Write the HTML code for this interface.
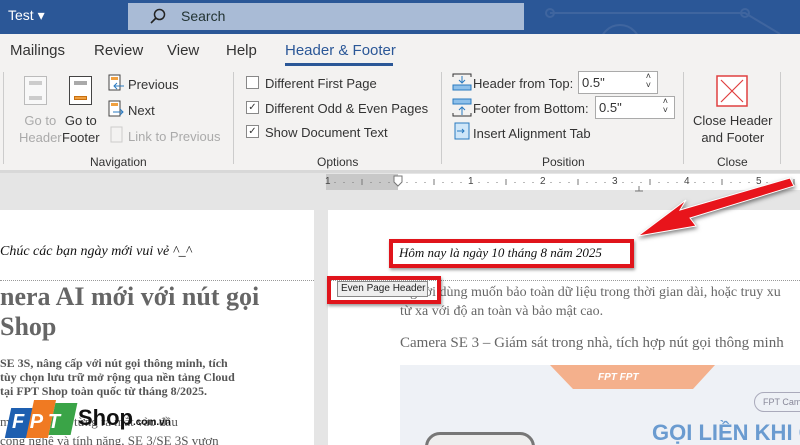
<!DOCTYPE html>
<html style="width:800px;height:445px;overflow:hidden"><head><meta charset="utf-8"><style>
*{margin:0;padding:0;box-sizing:border-box}
body{width:800px;height:445px;overflow:hidden;position:relative;background:#e5e5e5;font-family:"Liberation Sans",sans-serif;color:#333}
.a{position:absolute;white-space:nowrap}
.ser{font-family:"Liberation Serif","DejaVu Serif",serif}
.rb{font-size:13px;color:#333}
.cb{position:absolute;width:13px;height:13px;border:1px solid #888;background:#fff;font-size:10px;line-height:11px;text-align:center}
.inp{position:absolute;height:23px;border:1px solid #aaa;background:#fff;font-size:13px;padding:3px 3px}
.red{position:absolute;border:4px solid #e0141b;box-shadow:1px 2px 3px rgba(0,0,0,.4)}
.rn{position:absolute;top:176px;font-size:10px;color:#444}
</style></head><body>
<div class="a" style="left:0;top:0;width:800px;height:34px;background:#2b5797"></div>
<div class="a" style="left:8px;top:7px;color:#fff;font-size:14px">Test ▾</div>
<div class="a" style="left:128px;top:3px;width:396px;height:27px;background:#a9bbd6"></div>
<svg class="a" style="left:150px;top:8px" width="16" height="16"><circle cx="9.5" cy="6.5" r="5" fill="none" stroke="#222" stroke-width="1.5"/><line x1="6" y1="10" x2="1" y2="15" stroke="#222" stroke-width="1.6"/></svg>
<div class="a" style="left:181px;top:8px;font-size:14px;color:#233">Search</div>
<svg class="a" style="left:540px;top:0" width="260" height="34"><g fill="none" stroke="#3f659f" stroke-width="2"><path d="M10 13 H205 L240 34"/><circle cx="10" cy="13" r="4"/><circle cx="205" cy="13" r="4"/><circle cx="80" cy="45" r="20"/></g></svg>
<div class="a" style="left:0;top:34px;width:800px;height:136px;background:#f3f2f1"></div>
<div class="a" style="left:0;top:170px;width:800px;height:3px;background:#d8d8d8"></div>
<div class="a" style="left:10px;top:42px;font-size:15px">Mailings</div>
<div class="a" style="left:94px;top:42px;font-size:15px">Review</div>
<div class="a" style="left:167px;top:42px;font-size:15px">View</div>
<div class="a" style="left:226px;top:42px;font-size:15px">Help</div>
<div class="a" style="left:285px;top:42px;font-size:15px;color:#2b5797">Header &amp; Footer</div>
<div class="a" style="left:285px;top:63px;width:108px;height:3px;background:#2b5797"></div>
<div class="a" style="left:3px;top:72px;width:1px;height:92px;background:#ccc"></div>
<div class="a" style="left:233px;top:72px;width:1px;height:92px;background:#ccc"></div>
<div class="a" style="left:441px;top:72px;width:1px;height:92px;background:#ccc"></div>
<div class="a" style="left:683px;top:72px;width:1px;height:92px;background:#ccc"></div>
<div class="a" style="left:780px;top:72px;width:1px;height:92px;background:#ccc"></div>
<div class="a" style="left:24px;top:76px;width:23px;height:29px;border:1px solid #bbb;background:#f8f8f8"></div>
<div class="a" style="left:29px;top:81px;width:13px;height:4px;background:#ccc"></div>
<div class="a" style="left:29px;top:96px;width:13px;height:4px;background:#ccc"></div>
<div class="a" style="left:69px;top:76px;width:23px;height:29px;border:1px solid #444;background:#fff"></div>
<div class="a" style="left:74px;top:81px;width:13px;height:4px;background:#aaa"></div>
<div class="a" style="left:74px;top:96px;width:13px;height:4px;background:#f0a040;border:1px solid #c87010"></div>
<div class="a rb" style="left:19px;top:112px;color:#aaa;text-align:center;line-height:17px">Go to<br>Header</div>
<div class="a rb" style="left:62px;top:112px;text-align:center;line-height:17px">Go to<br>Footer</div>
<svg class="a" style="left:108px;top:74px" width="18" height="70"><rect x="1" y="1" width="11" height="15" fill="#fff" stroke="#444"/><rect x="3" y="3" width="7" height="3" fill="#f0a040"/><path d="M16 12H6M9 9 6 12 9 15" stroke="#2a7ac0" fill="none"/><rect x="1" y="27" width="11" height="15" fill="#fff" stroke="#444"/><rect x="3" y="29" width="7" height="3" fill="#f0a040"/><path d="M5 38H15M12 35 15 38 12 41" stroke="#2a7ac0" fill="none"/><rect x="3" y="53" width="11" height="15" fill="none" stroke="#ccc"/></svg>
<div class="a rb" style="left:128px;top:77px">Previous</div>
<div class="a rb" style="left:128px;top:103px">Next</div>
<div class="a rb" style="left:128px;top:129px;color:#aaa">Link to Previous</div>
<div class="a" style="left:90px;top:155px;font-size:12px">Navigation</div>
<div class="cb" style="left:246px;top:76px"></div>
<div class="cb" style="left:246px;top:101px">✓</div>
<div class="cb" style="left:246px;top:125px">✓</div>
<div class="a rb" style="left:265px;top:76px">Different First Page</div>
<div class="a rb" style="left:265px;top:101px">Different Odd &amp; Even Pages</div>
<div class="a rb" style="left:265px;top:125px">Show Document Text</div>
<div class="a" style="left:317px;top:155px;font-size:12px">Options</div>
<svg class="a" style="left:452px;top:73px" width="20" height="68"><path d="M1 4V1H19V4" stroke="#333" fill="none"/><path d="M10 3V10M7 7 10 10 13 7" stroke="#2a7ac0" fill="none"/><rect x="1" y="12" width="18" height="5" fill="#8ec0ea" stroke="#2a7ac0"/><rect x="1" y="26" width="18" height="5" fill="#8ec0ea" stroke="#2a7ac0"/><path d="M10 42V34M7 37 10 34 13 37" stroke="#2a7ac0" fill="none"/><path d="M1 40V43H19V40" stroke="#333" fill="none"/><rect x="3" y="50" width="14" height="16" fill="#cfe6f8" stroke="#2a7ac0"/><path d="M5 58H12M10 56 12 58 10 60" stroke="#2a7ac0" fill="none"/></svg>
<div class="a rb" style="left:473px;top:76px">Header from Top:</div>
<div class="inp" style="left:578px;top:71px;width:80px">0.5"<span style="position:absolute;right:6px;top:0;font-size:9px;line-height:9px">˄<br>˅</span></div>
<div class="a rb" style="left:473px;top:101px">Footer from Bottom:</div>
<div class="inp" style="left:595px;top:96px;width:80px">0.5"<span style="position:absolute;right:6px;top:0;font-size:9px;line-height:9px">˄<br>˅</span></div>
<div class="a rb" style="left:473px;top:126px">Insert Alignment Tab</div>
<div class="a" style="left:542px;top:155px;font-size:12px">Position</div>
<svg class="a" style="left:716px;top:75px" width="32" height="32"><rect x="1" y="1" width="30" height="30" fill="#fff" stroke="#e04040" stroke-width="1.5"/><path d="M5 5 27 27M27 5 5 27" stroke="#e04040" stroke-width="1.2"/></svg>
<div class="a rb" style="left:693px;top:112px;text-align:center;line-height:17px">Close Header<br>and Footer</div>
<div class="a" style="left:717px;top:155px;font-size:12px">Close</div>
<!-- ruler -->
<div class="a" style="left:326px;top:174px;width:474px;height:16px;background:#fff"></div>
<div class="a" style="left:326px;top:174px;width:72px;height:16px;background:#c8c8c8"></div>
<svg class="a" style="left:326px;top:174px" width="474" height="18"><g stroke="#777"><path d="M9 8v1M18 8v1M27 8v1M45 8v1M54 8v1M63 8v1M81 8v1M90 8v1M99 8v1M117 8v1M126 8v1M135 8v1M153 8v1M162 8v1M171 8v1M189 8v1M198 8v1M207 8v1M225 8v1M234 8v1M243 8v1M261 8v1M270 8v1M279 8v1M297 8v1M306 8v1M315 8v1M333 8v1M342 8v1M351 8v1M369 8v1M378 8v1M387 8v1M405 8v1M414 8v1M423 8v1M441 8v1M450 8v1M459 8v1"/><path d="M36 5v6M108 5v6M180 5v6M252 5v6M324 5v6M396 5v6M468 5v6"/><path d="M313 12v5M309 17h8"/></g><path d="M68 2h8v6l-4 4-4-4z" fill="#fff" stroke="#777"/></svg>
<div class="rn" style="left:325px">1</div>
<div class="rn" style="left:468px">1</div>
<div class="rn" style="left:540px">2</div>
<div class="rn" style="left:612px">3</div>
<div class="rn" style="left:684px">4</div>
<div class="rn" style="left:756px">5</div>
<!-- left page -->
<div class="a" style="left:0;top:210px;width:314px;height:235px;background:#fff"></div>
<div class="a ser" style="left:0;top:244px;font-size:14px;font-style:italic;color:#111">Chúc các bạn ngày mới vui vẻ ^_^</div>
<div class="a" style="left:0;top:280px;width:314px;border-top:1px dotted #999"></div>
<div class="a ser" style="left:0;top:282px;font-size:26px;font-weight:bold;color:#666;line-height:30px">nera AI mới với nút gọi<br>Shop</div>
<div class="a ser" style="left:0;top:356px;font-size:12px;font-weight:bold;color:#555;line-height:14px">SE 3S, nâng cấp với nút gọi thông minh, tích<br>tùy chọn lưu trữ mở rộng qua nền tảng Cloud<br>tại FPT Shop toàn quốc từ tháng 8/2025.</div>
<div class="a ser" style="left:0;top:412px;font-size:13px;color:#555;line-height:19px">m... và SE 2S từng ra mắt vào đầu<br>công nghệ và tính năng, SE 3/SE 3S vươn</div>
<div class="a" style="left:8px;top:408px;width:22px;height:30px;background:#1e5fb0;transform:skewX(-12deg)"></div>
<div class="a" style="left:30px;top:400px;width:22px;height:38px;background:#f07a22;transform:skewX(-12deg)"></div>
<div class="a" style="left:52px;top:403px;width:22px;height:32px;background:#3aa447;transform:skewX(-12deg)"></div>
<div class="a" style="left:12px;top:411px;color:#fff;font-weight:bold;font-style:italic;font-size:20px">F P T</div>
<div class="a" style="left:78px;top:405px;font-size:22px;font-weight:bold;color:#111">Shop<span style="font-size:10px">.com.vn</span></div>
<!-- right page -->
<div class="a" style="left:328px;top:210px;width:472px;height:235px;background:#fff"></div>
<div class="a" style="left:328px;top:280px;width:472px;border-top:1px dotted #999"></div>
<div class="red" style="left:389px;top:239px;width:245px;height:29px"></div>
<div class="a ser" style="left:399px;top:245px;font-size:13px;font-style:italic;color:#111">Hôm nay là ngày 10 tháng 8 năm 2025</div>
<div class="a ser" style="left:400px;top:283px;font-size:14px;color:#666;line-height:19px">Người dùng muốn bảo toàn dữ liệu trong thời gian dài, hoặc truy xu<br>từ xa với độ an toàn và bảo mật cao.</div>
<div class="red" style="left:327px;top:276px;width:114px;height:28px"></div>
<div class="a" style="left:337px;top:281px;width:91px;height:16px;border:1px solid #888;background:#eee;font-size:10px;padding:1px 3px;color:#222">Even Page Header</div>
<div class="a ser" style="left:400px;top:335px;font-size:15px;color:#666">Camera SE 3 – Giám sát trong nhà, tích hợp nút gọi thông minh</div>
<div class="a" style="left:400px;top:365px;width:400px;height:80px;background:#eef1f6;overflow:hidden">
<svg class="a" style="left:150px;top:0" width="180" height="30"><path d="M0 0H165L143 24H23Z" fill="#f4b08c"/><text x="48" y="15" fill="#fff" font-size="10" font-weight="bold" font-style="italic" font-family="Liberation Sans">FPT  FPT</text></svg>
<div class="a" style="left:354px;top:27px;width:60px;height:20px;border:1px solid #aab;border-radius:10px;font-size:9px;color:#889;padding:4px 8px">FPT Cam</div>
<div class="a" style="left:252px;top:55px;font-size:22px;font-weight:bold;color:#6a9bd0">GỌI LIỀN KHI G</div>
<div class="a" style="left:25px;top:67px;width:110px;height:30px;border:3px solid #777;border-radius:15px;background:#eee"></div>
</div>
<svg class="a" style="left:600px;top:170px" width="200" height="80"><path d="M190 8 L80 40 L86 30 L38 66 L96 56 L90 48 L194 16Z" fill="#e8141b" stroke="#fff" stroke-width="1" style="filter:drop-shadow(1px 2px 2px rgba(0,0,0,.5))"/></svg>
</body></html>
